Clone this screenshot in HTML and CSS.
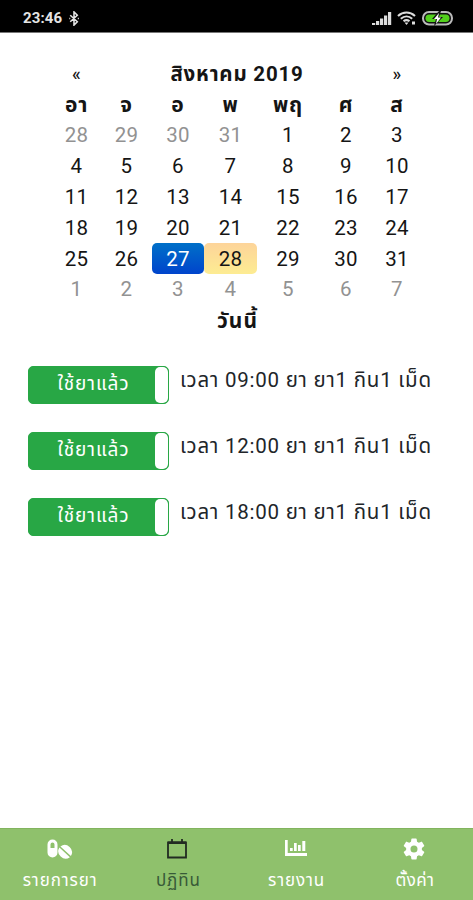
FILE: index.html
```html
<!DOCTYPE html>
<html lang="th">
<head>
  <meta charset="UTF-8" />
  <meta name="viewport" content="width=device-width, initial-scale=1.0" />
  <title>ปฏิทิน</title>
  <link rel="stylesheet" href="styles.css">
</head>
<body>
  <header class="status-bar">
    <div class="status-left">
      <span class="clock">23:46</span>
      <svg class="bluetooth" viewBox="0 0 12 16"><path d="M2 4.500l7.500 7L6 15V1l3.500 3.500L2 11.500M1 8h1M10 8h1.200" /></svg>
    </div>
    <div class="status-right">
      <svg class="signal" viewBox="0 0 20 13"><path d="M0 11h3.200v2H0zM4 9h3.200v4H4zM8 6.500h3.200V13H8zM12 3.500h3.200V13H12zM16 0h3.200v13H16z" /></svg>
      <svg class="wifi" viewBox="0 0 20 15">
        <path class="wave" d="M1 5c5-4.600 12-4.600 17 0M3.800 7.700c3.500-3 8-3 11.400 0M6.500 10.300c2-1.600 4-1.600 6 0" />
        <path d="M7.500 11.500h4l-2 2.500zM15 10.500h3v3h-3z" />
      </svg>
      <svg class="battery" viewBox="0 0 31 15">
        <rect class="case" x="1" y="1" width="29" height="12.500" rx="6" />
        <rect class="level" x="3.500" y="3.500" width="24" height="7.500" rx="3.700" />
        <path class="gap" d="M17 0L10 8h4l-2 7 9-9h-4l2-6z" />
        <path class="bolt" d="M17 2l-5 6h3l-1 5 5-6.500h-3z" />
      </svg>
    </div>
  </header>

  <main>
    <table class="calendar">
      <colgroup>
        <col class="sun"><col class="mon"><col class="tue"><col class="wed"><col class="thu"><col class="fri"><col class="sat">
      </colgroup>
      <thead>
        <tr><th class="arrow">«</th><th colspan="5" class="month">สิงหาคม 2019</th><th class="arrow">»</th></tr>
        <tr class="weekdays"><th>อา</th><th>จ</th><th>อ</th><th>พ</th><th>พฤ</th><th>ศ</th><th>ส</th></tr>
      </thead>
      <tbody>
        <tr><td class="old">28</td><td class="old">29</td><td class="old">30</td><td class="old">31</td><td>1</td><td>2</td><td>3</td></tr>
        <tr><td>4</td><td>5</td><td>6</td><td>7</td><td>8</td><td>9</td><td>10</td></tr>
        <tr><td>11</td><td>12</td><td>13</td><td>14</td><td>15</td><td>16</td><td>17</td></tr>
        <tr><td>18</td><td>19</td><td>20</td><td>21</td><td>22</td><td>23</td><td>24</td></tr>
        <tr><td>25</td><td>26</td><td class="active">27</td><td class="today">28</td><td>29</td><td>30</td><td>31</td></tr>
        <tr><td class="new">1</td><td class="new">2</td><td class="new">3</td><td class="new">4</td><td class="new">5</td><td class="new">6</td><td class="new">7</td></tr>
      </tbody>
      <tfoot>
        <tr><th colspan="7" class="now">วันนี้</th></tr>
      </tfoot>
    </table>

    <div class="doses">
      <div class="dose">
        <button class="toggle"><span class="on">ใช้ยาแล้ว</span><span class="handle"></span></button>
        <span class="detail">เวลา 09:00 ยา ยา1 กิน1 เม็ด</span>
      </div>
      <div class="dose">
        <button class="toggle"><span class="on">ใช้ยาแล้ว</span><span class="handle"></span></button>
        <span class="detail">เวลา 12:00 ยา ยา1 กิน1 เม็ด</span>
      </div>
      <div class="dose">
        <button class="toggle"><span class="on">ใช้ยาแล้ว</span><span class="handle"></span></button>
        <span class="detail">เวลา 18:00 ยา ยา1 กิน1 เม็ด</span>
      </div>
    </div>
  </main>

  <nav class="tabs">
    <a class="tab">
      <svg class="pills" viewBox="0 0 26 22">
        <path fill-rule="evenodd" d="M5.500 1.500a5 5 0 0 1 5 5v8a5 5 0 0 1-10 0v-8a5 5 0 0 1 5-5zM5.500 4.500a2 2 0 0 0-2 2v3.500h4V6.500a2 2 0 0 0-2-2z" />
        <path d="M13.400 8.400l10.500 9.700a7.300 7.300 0 0 0-10.500-9.700zM12.400 9.500a7.300 7.300 0 0 0 10.500 9.700z" />
      </svg>
      <span>รายการยา</span>
    </a>
    <a class="tab active">
      <svg viewBox="0 0 22 22"><path class="line" d="M2 4.500h18v15H2zM6 4.500V1M16 4.500V1" /><path d="M2 3.500h18v2.500H2z" /></svg>
      <span>ปฏิทิน</span>
    </a>
    <a class="tab">
      <svg viewBox="0 0 24 22"><path d="M1 2h2.700v13H23v3H1zM6 10h2.700v3H6zM10 5h2.700v8H10zM14 7h2.700v6H14zM18.300 3h3v10h-3z" /></svg>
      <span>รายงาน</span>
    </a>
    <a class="tab settings">
      <svg viewBox="2 2 20 20"><path d="M19.140 12.940a7 7 0 0 0 0-1.880l2.030-1.580a.5.5 0 0 0 .12-.61l-1.920-3.320a.5.5 0 0 0-.59-.22l-2.390.96a7 7 0 0 0-1.620-.94l-.36-2.540a.5.5 0 0 0-.48-.41h-3.840a.5.5 0 0 0-.47.41l-.36 2.540a7 7 0 0 0-1.620.94l-2.390-.96a.5.5 0 0 0-.59.22L2.740 8.870a.5.5 0 0 0 .12.61l2.030 1.580a7 7 0 0 0 0 1.880l-2.030 1.580a.5.5 0 0 0-.12.61l1.920 3.320c.12.22.37.29.59.22l2.390-.96c.5.380 1.030.700 1.620.94l.36 2.540c.5.240.240.410.480.410h3.840c.24 0 .44-.17.47-.41l.36-2.540a7 7 0 0 0 1.620-.94l2.390.96c.22.080.470 0 .590-.220l1.920-3.320a.5.5 0 0 0-.12-.61zM12 15.200a3.200 3.200 0 1 1 0-6.400 3.200 3.200 0 0 1 0 6.400z" /></svg>
      <span>ตั้งค่า</span>
    </a>
  </nav>
</body>
</html>
```
FILE: styles.css
```css
:root {
  --bar-green: #8fc16c;
  --button-green: #28a745;
}

* {
  box-sizing: border-box;
  margin: 0;
  padding: 0;
}

body {
  font-family: Roboto, 'Noto Sans Thai', 'Noto Sans', sans-serif;
  height: 100vh;
  display: flex;
  flex-direction: column;
  background: #fff;
  color: #212529;
  overflow: hidden;
}

.status-bar {
  height: 33px;
  flex: none;
  display: flex;
  justify-content: space-between;
  padding: 4px 20px 0 23px;
  background: #000;
  border-bottom: 1px solid #777;
  color: #e4e4e4;
}

.status-left,
.status-right {
  display: flex;
  align-items: center;
}

.clock {
  font-size: 15px;
  font-weight: 700;
  letter-spacing: 0.1px;
}

.bluetooth {
  width: 12px;
  height: 15px;
  margin-left: 6px;
  fill: none;
  stroke: #e4e4e4;
  stroke-width: 1.7;
}

.status-right svg {
  fill: #ddd;
}

.signal {
  width: 20px;
  height: 13px;
}

.wifi {
  width: 20px;
  height: 15px;
  margin-left: 5px;
}

.wifi .wave {
  fill: none;
  stroke: #ddd;
  stroke-width: 2.1;
}

.battery {
  width: 31px;
  height: 15px;
  margin-left: 5px;
}

.battery .case {
  fill: #111;
  stroke: #bbb;
  stroke-width: 2;
}

.battery .level {
  fill: #52d01c;
}

.battery .gap {
  fill: #111;
}

.battery .bolt {
  fill: #fff;
}

main {
  flex: 1;
}

.calendar {
  width: 369px;
  margin: 25px 0 0 52px;
  border-collapse: collapse;
  table-layout: fixed;
  font-size: 20.5px;
  text-align: center;
  color: #151515;
}

.sun { width: 49px; }
.mon { width: 51px; }
.tue { width: 52px; }
.wed { width: 53px; }
.thu { width: 62px; }
.fri { width: 54px; }
.sat { width: 48px; }

.calendar tr {
  height: 30.8px;
}

.calendar th,
.calendar td {
  height: 30.8px;
  padding-top: 1px;
  line-height: 26px;
  letter-spacing: 0.3px;
  border-radius: 5px;
}

.calendar th {
  padding-top: 2px;
}

.calendar .month {
  letter-spacing: 0.8px;
}

.calendar .weekdays th {
  font-size: 21px;
  letter-spacing: 0.8px;
}

.calendar .now {
  font-size: 21px;
  padding-left: 2px;
  letter-spacing: 1px;
}

.calendar .arrow {
  font-size: 18px;
  font-weight: 500;
}

.calendar .old,
.calendar .new {
  color: #929292;
}

.calendar .active {
  color: #fff;
  background: linear-gradient(#0070c8, #0044cc);
}

.calendar .today {
  background: linear-gradient(#fdd49a, #fdec92);
}

.doses {
  padding: 31px 0 0 28px;
}

.dose {
  display: flex;
  height: 38px;
  margin-bottom: 28px;
}

.toggle {
  width: 141px;
  height: 38px;
  flex: none;
  display: flex;
  border: 1px solid var(--button-green);
  border-radius: 5px;
  background: var(--button-green);
  color: #fff;
  font: inherit;
  font-size: 19px;
  letter-spacing: 0.9px;
  overflow: hidden;
}

.toggle .on {
  flex: 1;
  line-height: 33px;
  padding-left: 3px;
}

.toggle .handle {
  width: 13px;
  height: 36px;
  border-radius: 5px;
  background: #fff;
}

.detail {
  margin-left: 11px;
  line-height: 28px;
  font-size: 20.5px;
  letter-spacing: 0.77px;
  white-space: nowrap;
}

.tabs {
  height: 72px;
  flex: none;
  display: grid;
  grid-template-columns: repeat(4, 1fr);
  background: var(--bar-green);
  border-top: 1px solid #82b45e;
  color: #fff;
}

.tab {
  display: flex;
  flex-direction: column;
  align-items: center;
  padding-top: 9px;
  font-size: 17px;
  line-height: 24px;
  letter-spacing: 0.9px;
}

.tab span {
  padding-left: 2px;
}

.tab.settings {
  letter-spacing: 0.4px;
}

.tab svg {
  height: 22px;
  margin-bottom: 8px;
  fill: currentColor;
}

.tab .pills {
  margin-left: 2px;
}

.tab.active {
  color: #385a38;
}

.tab.active svg {
  color: #222b22;
}

.tab .line {
  fill: none;
  stroke: currentColor;
  stroke-width: 1.8;
}
```
